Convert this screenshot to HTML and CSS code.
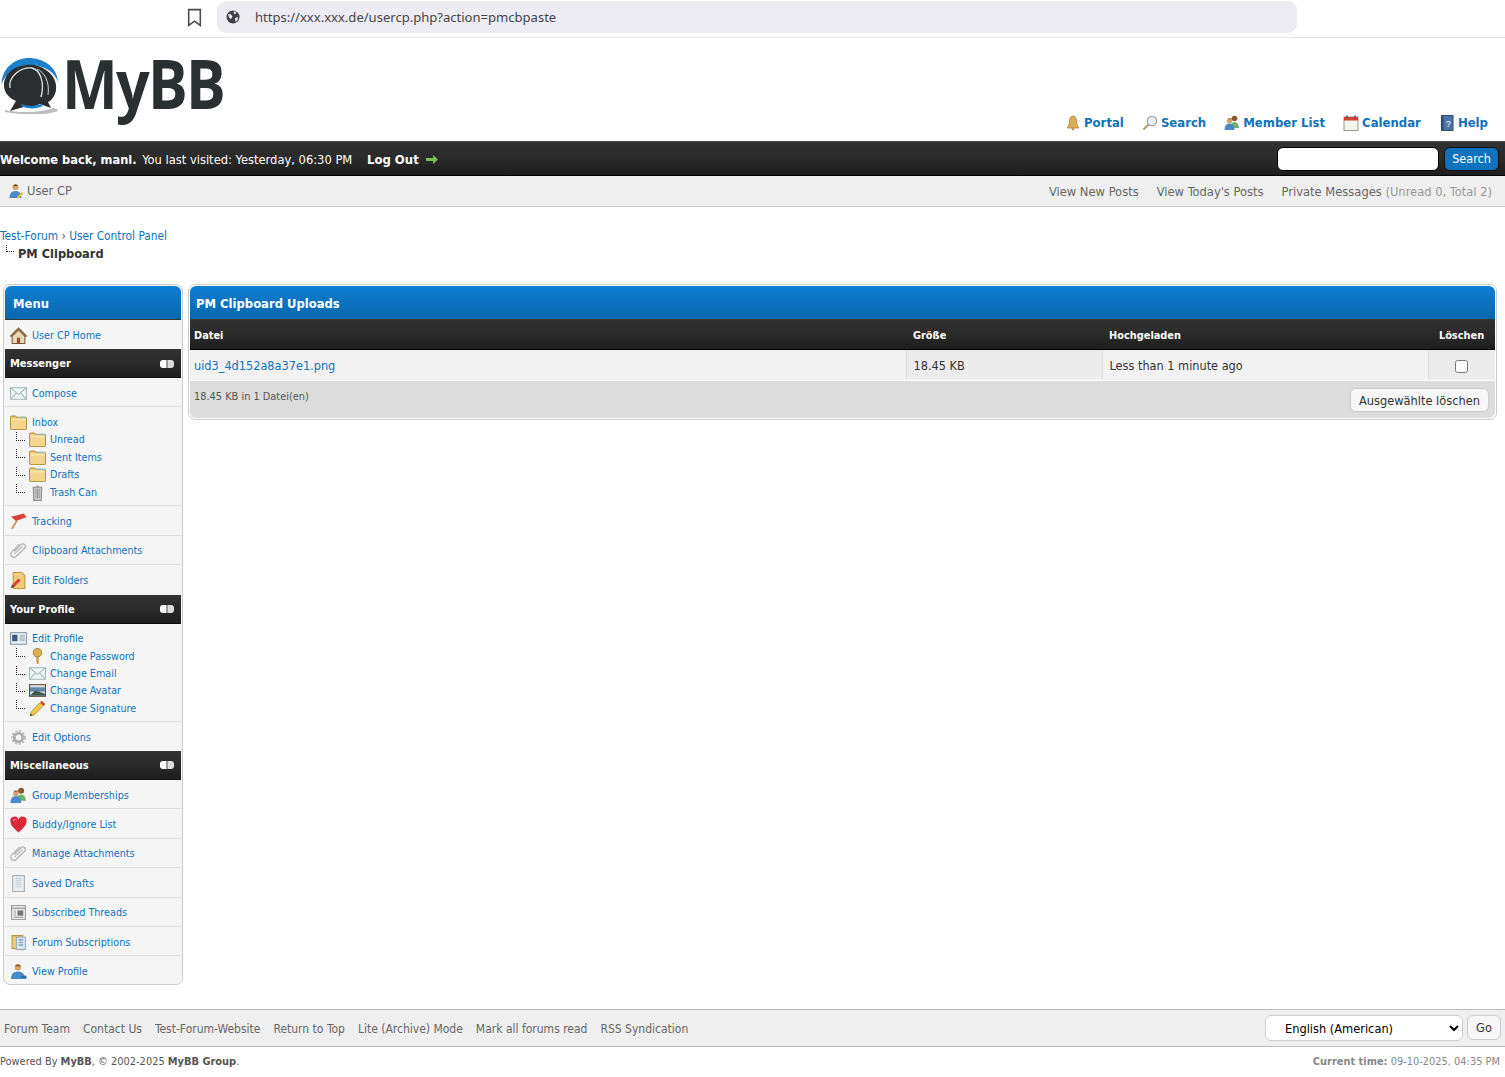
FILE: index.html
```html
<!DOCTYPE html>
<html lang="en">

<head>
  <meta charset="UTF-8">
  <meta name="viewport" content="width=device-width, initial-scale=1.0">
  <title>PM Clipboard</title>
  <link rel="stylesheet" href="styles.css">
</head>

<body>
  <!-- shared icons -->
  <svg class="sprites" xmlns="http://www.w3.org/2000/svg">
    <symbol id="i-folder" viewBox="0 0 16 14">
      <path d="M.5 2.5Q.5 1 2 1h3l1 1h8.5q1 0 1 1v9.5q0 1-1 1H1.5q-1 0-1-1z" fill="#f3d58b" stroke="#b89545"/>
      <path d="M1 4.5h14" stroke="#fbeec4"/>
      <path d="M10 1.5h4.500v1.500H10z" fill="#8fc3e6"/>
    </symbol>
    <symbol id="i-mail" viewBox="0 0 16 12">
      <rect x=".5" y=".5" width="15" height="11" fill="#eef3f3" stroke="#a9bcbc"/>
      <path d="M.5.5 8 7l7.5-6.5M.5 11.5 6 5.500m9.500 6L10 5.500" fill="none" stroke="#a9bcbc"/>
    </symbol>
    <symbol id="i-clip" viewBox="0 0 16 16">
      <path d="M4 9.5 10.5 3a2.300 2.300 0 0 1 3.300 3.300L6 14a3 3 0 0 1-4.300-4.200L9 2.500" transform="translate(0 -.5)" fill="none" stroke="#b5b5b5" stroke-width="1.300"/>
      <path d="M4 11.5 11.5 4.500" fill="none" stroke="#b5b5b5"/>
    </symbol>
    <symbol id="i-users" viewBox="0 0 16 16">
      <circle cx="10.5" cy="3.500" r="2.800" fill="#8a5a2b"/>
      <path d="M6.5 13q0-6 4-6t4.500 6z" fill="#6fae6a"/>
      <circle cx="5.5" cy="6" r="2.600" fill="#d6a06a"/>
      <path d="M5 4.5a2.600 2.600 0 0 1 3 0v-1H3.500z" fill="#6b4a26"/>
      <path d="M.5 15q0-6.500 5-6.500t5 6.500z" fill="#4a89c8"/>
    </symbol>
  </svg>

  <div class="browser-bar">
    <svg class="bookmark" viewBox="0 0 14 18"><path d="M1.5 1.5h11v15L7 12.500l-5.500 4z" fill="none" stroke="#4a4a4a" stroke-width="1.500"/></svg>
    <div class="url-pill">
      <svg class="globe" viewBox="0 0 14 14"><circle cx="7" cy="7" r="6.500" fill="#3f3f46"/><path d="M2 4l3 .5 1.500 2L5 9 3 7.500zM8 1.500l2.500.5L9 4.500 7.500 3zM9 8l3-1-.5 3L9.500 12z" fill="#edecf2"/></svg>
      <span>https://xxx.xxx.de/usercp.php?action=pmcbpaste</span>
    </div>
  </div>

  <div class="header">
    <a class="logo">
      <svg class="logo-bubble" viewBox="0 0 58 56">
        <path d="M.5 26C1 9 15 0 28 0s28 8 29 24c-3-10-14-17-28-17S5 15 .5 26z" fill="#1a80cd"/>
        <path d="M25 7c8-1 15 1 20 5 8 5 11 13 10 20-1 6-4 10-8 12l3 6-11-4c-4 2-9 3-13 2l-17 5 6-10C6 39 3 33 3 27 3 16 13 8 25 7z" fill="#2a2e30"/>
        <path d="M9 30C7 19 19 9 31 10c8 2 13 14 9 29" fill="none" stroke="#e4e7e8" stroke-width="1.300"/>
        <path d="M36 11c7 3 13 12 11 26" fill="none" stroke="#cfd4d6" stroke-width="1"/>
        <path d="M20 46c8 3 16 2 20 0l2 2c-6 3-14 3-20 1z" fill="#1a80cd"/>
        <path d="M4 52c12 3 36 3 48-2l4 1 1 2c-12 5-38 4-53 1z" fill="#bdbdbd"/>
      </svg>
      <span class="logo-text">MyBB</span>
    </a>
    <ul class="top-links">
      <li>
        <svg viewBox="0 0 16 16"><path d="M8 1c3 0 3.500 3 3.500 5 0 3 1 5 2.500 7H2c1.500-2 2.500-4 2.500-7C4.500 4 5 1 8 1z" fill="#d9ae55" stroke="#a07c33" stroke-width=".7"/><path d="M6 13.5h4L8 15.500z" fill="#a07c33"/></svg>
        <a>Portal</a>
      </li>
      <li>
        <svg viewBox="0 0 16 16"><circle cx="10" cy="6" r="4.700" fill="#e8f0f3" stroke="#9aa7ad" stroke-width="1.200"/><path d="M6.5 9.5 1.5 14.500" stroke="#b09a70" stroke-width="2"/></svg>
        <a>Search</a>
      </li>
      <li><svg><use href="#i-users"/></svg><a>Member List</a></li>
      <li>
        <svg viewBox="0 0 16 16"><rect x="1" y="2" width="14" height="13.500" fill="#f5f5ef" stroke="#9a9a90"/><rect x="1" y="2" width="14" height="3.500" fill="#d8413a"/><path d="M4 .5v3M12 .5v3" stroke="#555" stroke-width="1.500"/></svg>
        <a>Calendar</a>
      </li>
      <li>
        <svg viewBox="0 0 16 16"><rect x="2.5" y=".5" width="11.500" height="15" fill="#4d72a8" stroke="#2d4a75"/><path d="M2.5 1.5h2v14h-2z" fill="#2d4a75"/><text x="9.200" y="11.500" font-size="9" fill="#fff" text-anchor="middle" font-family="Liberation Sans">?</text></svg>
        <a>Help</a>
      </li>
    </ul>
  </div>

  <div class="panel">
    <div class="welcome">
      <strong>Welcome back, mani.</strong> You last visited: Yesterday, 06:30 PM
      <a class="logout">Log Out <svg class="logout-arrow" viewBox="0 0 12 9"><path d="M0 3h7V0l5 4.500L7 9V6H0z" fill="#7dbb56"/></svg></a>
    </div>
    <form class="quick-search">
      <input class="search-box" type="text">
      <button class="search-btn" type="button">Search</button>
    </form>
  </div>

  <div class="subpanel">
    <a class="sub-usercp">
      <svg viewBox="0 0 16 16"><circle cx="7.5" cy="4" r="3" fill="#d6a06a"/><path d="M5 3q2.500-3 5 0z" fill="#5a3d20"/><path d="M1.5 15q0-7 6-7t6 7z" fill="#4a89c8"/><path d="M9 14l5-5 1.500 1.500-5 5H9z" fill="#e8c23a"/></svg>
      User CP
    </a>
    <div class="sub-links">
      <a>View New Posts</a>
      <a>View Today's Posts</a>
      <a>Private Messages <span class="pm-count">(Unread 0, Total 2)</span></a>
    </div>
  </div>

  <div class="navigation">
    <a class="blue">Test-Forum</a> › <a class="blue">User Control Panel</a>
    <div class="nav-active"><span class="nav-bit"></span><strong>PM Clipboard</strong></div>
  </div>

  <div class="content">
    <div class="tborder sidebar">
      <div class="thead">Menu</div>

      <a class="row r-first"><svg viewBox="0 0 16 16"><path d="M8 1 .5 8.5 2 9.5V15.500h12V9.5l1.500-1z" fill="#e8d8b8" stroke="#7a5a3a"/><path d="M8 1 .5 8.5 2 9.5 8 3.500l6 6 1.500-1z" fill="#8f6a47"/><rect x="6.5" y="10" width="3" height="5.500" fill="#a34d2a"/></svg>User CP Home</a>

      <div class="tcat">Messenger<span class="toggle"></span></div>
      <a class="row r-sep"><svg><use href="#i-mail"/></svg>Compose</a>
      <div class="group r-sep">
        <a class="line"><svg><use href="#i-folder"/></svg>Inbox</a>
        <a class="line sub"><i class="tree"></i><svg><use href="#i-folder"/></svg>Unread</a>
        <a class="line sub"><i class="tree"></i><svg><use href="#i-folder"/></svg>Sent Items</a>
        <a class="line sub"><i class="tree"></i><svg><use href="#i-folder"/></svg>Drafts</a>
        <a class="line sub"><i class="tree"></i><svg viewBox="0 0 16 16"><path d="M4 3h8l-.5 12.500h-7z" fill="#c9c9c9" stroke="#8c8c8c"/><path d="M6.5 4.5v9M8 4.5v9M9.5 4.5v9" stroke="#8c8c8c" stroke-width=".7"/><path d="M6 3l2-2 2 2z" fill="#aaa"/></svg>Trash Can</a>
      </div>
      <a class="row r-sep"><svg viewBox="0 0 16 16"><path d="M1 3.5 13 .5l2.500 3.500L5.500 7.500z" fill="#d8413a"/><path d="M6 6.5 1 14.500l1.500.5 5-8z" fill="#c8905a"/></svg>Tracking</a>
      <a class="row r-sep"><svg><use href="#i-clip"/></svg>Clipboard Attachments</a>
      <a class="row r-last"><svg viewBox="0 0 16 16"><path d="M3 .5h8l3 3v12H3z" fill="#f0cd7a" stroke="#c0983f"/><path d="M1 15l1-3 6-6 2 2-6 6z" fill="#d8413a"/><path d="M1 15l1-3 2 2z" fill="#444"/></svg>Edit Folders</a>

      <div class="tcat">Your Profile<span class="toggle"></span></div>
      <div class="group r-sep g-profile">
        <a class="line"><svg viewBox="0 0 16 12"><rect x=".5" y=".5" width="15" height="11" fill="#e6ecf2" stroke="#8a9aaa"/><rect x="2" y="2.500" width="5" height="6" fill="#3e5a88"/><path d="M9 3.5h5M9 5.5h5M9 7.5h5" stroke="#9aa"/></svg>Edit Profile</a>
        <a class="line sub"><i class="tree"></i><svg viewBox="0 0 16 18"><circle cx="8" cy="5" r="4.500" fill="#dcb04a" stroke="#a07c33"/><path d="M6.800 9h2.400v8H8l-1.200-1z" fill="#c89a3a"/></svg>Change Password</a>
        <a class="line sub"><i class="tree"></i><svg><use href="#i-mail"/></svg>Change Email</a>
        <a class="line sub"><i class="tree"></i><svg viewBox="0 0 16 12"><rect x=".5" y=".5" width="15" height="11" fill="#dce6ea" stroke="#6a4a3a"/><path d="M1 3h14v4H1z" fill="#5f86a8"/><path d="M1 10.5 6 6l9 3v2H1z" fill="#3e5a50"/></svg>Change Avatar</a>
        <a class="line sub"><i class="tree"></i><svg viewBox="0 0 16 16"><path d="M1 15l1-4L12 1l3 3L5 14z" fill="#ecc94a" stroke="#a98a20" stroke-width=".7"/><path d="M12 1l3 3-1.500 1.500-3-3z" fill="#d8413a"/><path d="M1 15l.6-2.300 1.700 1.700z" fill="#333"/></svg>Change Signature</a>
      </div>
      <a class="row r-last"><svg viewBox="0 0 16 16"><circle cx="8" cy="8" r="4" fill="none" stroke="#aaa" stroke-width="2.500"/><circle cx="8" cy="8" r="6" fill="none" stroke="#bbb" stroke-width="2" stroke-dasharray="2 1.500"/></svg>Edit Options</a>

      <div class="tcat">Miscellaneous<span class="toggle"></span></div>
      <a class="row r-sep"><svg><use href="#i-users"/></svg>Group Memberships</a>
      <a class="row r-sep"><svg viewBox="0 0 16 16"><path d="M8 15.5C4 12 .5 9 .5 5.500A3.800 3.800 0 0 1 8 3.500a3.800 3.800 0 0 1 7.500 2c0 3.500-3.500 6.500-7.500 10z" fill="#d8283a"/><path d="M3 4.5q1-1.500 3-1" fill="none" stroke="#f4a0a8"/></svg>Buddy/Ignore List</a>
      <a class="row r-sep"><svg><use href="#i-clip"/></svg>Manage Attachments</a>
      <a class="row r-sep"><svg viewBox="0 0 16 16"><rect x="2.5" y=".5" width="11" height="15" fill="#e6edf3" stroke="#a5adb3"/><path d="M5 3h6M5 5h6M5 7h6M5 9h6M5 11h6" stroke="#c5cdd3"/></svg>Saved Drafts</a>
      <a class="row r-sep"><svg viewBox="0 0 16 16"><rect x="1.5" y="1.500" width="13" height="13" fill="#eee" stroke="#999"/><path d="M1.5 4h13" stroke="#888"/><rect x="7" y="6" width="5.500" height="5" fill="#777"/><path d="M3.5 6.5h2M3.5 8.5h2M3.5 10.500h2M3.500 12.500h9" stroke="#999"/></svg>Subscribed Threads</a>
      <a class="row r-sep"><svg viewBox="0 0 16 16"><path d="M2 1.5h10V15L2 13.500z" fill="#f0cd7a" stroke="#b89545"/><rect x="6" y="3" width="8.500" height="11.500" fill="#dfeaf0" stroke="#9ab"/><path d="M8 5.5h4.500M8 8h4.500M8 10.500h4.500" stroke="#7fb0d0" stroke-width="1.500"/></svg>Forum Subscriptions</a>
      <a class="row r-end"><svg viewBox="0 0 16 16"><circle cx="7.5" cy="4" r="3" fill="#d6a06a"/><path d="M5 3q2.500-3 5 0z" fill="#6b4a26"/><path d="M1 15q0-7 6.500-7T14 15z" fill="#4a89c8"/><path d="M10 12.5h4V11l2 2.500-2 2V14h-4z" fill="#2a6cae"/></svg>View Profile</a>
    </div>

    <div class="tborder main">
      <div class="thead thead-main">PM Clipboard Uploads</div>
      <table class="files">
        <thead>
          <tr>
            <th class="c-file">Datei</th>
            <th class="c-size">Größe</th>
            <th class="c-date">Hochgeladen</th>
            <th class="c-del">Löschen</th>
          </tr>
        </thead>
        <tbody>
          <tr>
            <td class="c-file"><a class="blue">uid3_4d152a8a37e1.png</a></td>
            <td class="c-size">18.45 KB</td>
            <td class="c-date">Less than 1 minute ago</td>
            <td class="c-del"><input class="check" type="checkbox"></td>
          </tr>
        </tbody>
      </table>
      <div class="table-foot">
        <span class="foot-total">18.45 KB in 1 Datei(en)</span>
        <button class="btn" type="button">Ausgewählte löschen</button>
      </div>
    </div>
  </div>

  <div class="footer-bar">
    <div class="footer-links">
      <a>Forum Team</a>
      <a>Contact Us</a>
      <a>Test-Forum-Website</a>
      <a>Return to Top</a>
      <a>Lite (Archive) Mode</a>
      <a>Mark all forums read</a>
      <a>RSS Syndication</a>
    </div>
    <form class="lang-form">
      <select class="lang-select"><option>English (American)</option></select>
      <button class="btn btn-go" type="button">Go</button>
    </form>
  </div>

  <div class="copyright">
    <span>Powered By <strong>MyBB</strong>, © 2002-2025 <strong>MyBB Group</strong>.</span>
    <span class="time"><strong>Current time:</strong> 09-10-2025, 04:35 PM</span>
  </div>
</body>

</html>
```

FILE: styles.css
```css
* {
  box-sizing: border-box;
}

body {
  margin: 0;
  font-family: "DejaVu Sans", Tahoma, sans-serif;
  font-stretch: condensed;
  font-size: 12px;
  color: #333;
  background: #fff;
}

.sprites {
  display: none;
}

.blue,
.row,
.line,
.top-links a {
  color: #0f72bd;
}

svg {
  flex: none;
}

/* browser chrome */
.browser-bar {
  height: 38px;
  display: flex;
  align-items: flex-start;
  padding: 1px 0 0 187px;
  border-bottom: 1px solid #e6e6e6;
}

.bookmark {
  width: 15px;
  height: 19px;
  margin: 7px 15px 0 0;
}

.url-pill {
  width: 1080px;
  height: 32px;
  display: flex;
  align-items: center;
  padding-left: 9px;
  border-radius: 9px;
  background: #edecf2;
  font-family: "Noto Sans", sans-serif;
  font-stretch: normal;
  font-size: 13.05px;
  color: #44444a;
}

.globe {
  width: 14px;
  height: 14px;
  margin-right: 15px;
}

/* header */
.header {
  height: 103px;
  position: relative;
  display: flex;
  justify-content: space-between;
}

.logo {
  display: flex;
  align-items: flex-start;
  padding: 20px 0 0 1px;
}

.logo-bubble {
  width: 58px;
  height: 56px;
}

.logo-text {
  margin: -23px 0 0 3px;
  font-family: "Open Sans", sans-serif;
  font-stretch: normal;
  font-weight: 700;
  font-size: 68px;
  line-height: 96px;
  color: #2a2f31;
  letter-spacing: -2px;
  transform: scaleX(.87);
  transform-origin: left;
}

.top-links {
  list-style: none;
  margin: 0;
  padding: 0 17px 0 0;
  display: flex;
  gap: 18px;
  align-self: flex-end;
  height: 27px;
}

.top-links li {
  display: flex;
  align-items: center;
  height: 17px;
  gap: 3px;
}

.top-links svg {
  width: 16px;
  height: 16px;
}

.top-links a {
  font-weight: 700;
  font-size: 13px;
}

/* dark bars */
.panel,
.tcat,
.files th {
  background: linear-gradient(#323232, #2a2a2a 50%, #1d1d1d);
  color: #fff;
}

.panel {
  height: 35px;
  display: flex;
  align-items: center;
  justify-content: space-between;
  padding: 0 6px 0 0;
  border-top: 1px solid #444;
  border-bottom: 1px solid #000;
  font-size: 12.8px;
}

.welcome {
  padding-top: 1px;
}

.welcome strong {
  margin-right: 2px;
  font-size: 12.7px;
}

.logout {
  margin-left: 11px;
  font-weight: 700;
  font-size: 13px;
}

.logout-arrow {
  width: 12px;
  height: 9px;
  margin-left: 3px;
}

.quick-search {
  display: flex;
  gap: 5px;
}

.search-box {
  width: 162px;
  height: 24px;
  border: 1px solid #000;
  border-radius: 6px;
  background: #fff;
}

.search-btn {
  width: 55px;
  height: 24px;
  padding: 0;
  border: 1px solid #111;
  border-radius: 6px;
  background: #0f72bd;
  color: #fff;
  font: inherit;
  font-size: 12.5px;
}

.subpanel {
  height: 31px;
  display: flex;
  align-items: center;
  justify-content: space-between;
  padding: 0 13px 0 8px;
  background: #efefef;
  border-bottom: 1px solid #ccc;
  color: #666;
  font-size: 12.8px;
}

.sub-usercp {
  display: flex;
  align-items: center;
  gap: 3px;
  margin-top: -1px;
}

.sub-usercp svg {
  width: 16px;
  height: 16px;
}

.sub-links {
  display: flex;
  gap: 18px;
}

.pm-count {
  color: #999;
}

/* breadcrumb */
.navigation {
  height: 77px;
  padding-top: 21px;
  line-height: 17px;
  font-size: 11.8px;
  color: #555;
}

.nav-active {
  display: flex;
  color: #333;
  font-size: 12.7px;
}

.nav-bit {
  width: 8px;
  height: 7px;
  margin: 0 4px 0 6px;
  border-left: 1px dotted #222;
  border-bottom: 1px dotted #222;
}

/* boxes */
.content {
  display: flex;
  align-items: flex-start;
  gap: 5px;
  padding: 0 8px 0 3px;
}

.tborder {
  border: 1px solid #ccc;
  border-radius: 7px;
  padding: 1px;
  background: #fff;
}

.thead {
  height: 34px;
  display: flex;
  align-items: center;
  padding: 1px 0 0 8px;
  border-radius: 6px 6px 0 0;
  border-bottom: 1px solid #263c30;
  background: linear-gradient(#0f7fd4, #0867ab);
  color: #fff;
  font-weight: 700;
  font-size: 12.9px;
}

.thead-main {
  padding-left: 6px;
}

/* sidebar */
.sidebar {
  width: 180px;
  height: 701px;
  flex: none;
  background: #f5f5f5;
  font-size: 10.7px;
}

.tcat {
  height: 29px;
  display: flex;
  align-items: center;
  justify-content: space-between;
  padding: 1px 7px 0 5px;
  font-weight: 700;
  font-size: 11px;
  border-bottom: 1px solid #111;
}

.toggle {
  width: 14px;
  height: 8px;
  border-radius: 3px;
  background: linear-gradient(90deg, #fff 45%, #999 45%, #999 55%, #ddd 55%);
}

.row {
  display: flex;
  align-items: center;
  height: 29.4px;
  padding: 2px 0 0 5px;
}

.row svg,
.line svg {
  width: 17px;
  height: 17px;
  margin-right: 5px;
}

.r-sep {
  border-bottom: 1px solid #ddd;
}

.r-first {
  height: 29px;
  background: #f5f5f5;
}

.r-end {
  height: 29px;
}

.group {
  padding: 6px 0 5px 5px;
  height: 99px;
}

.g-profile {
  height: 98px;
}

.line {
  display: flex;
  align-items: center;
  height: 17.4px;
  padding-top: 1px;
}

.line.sub {
  padding-left: 6px;
}

.line.sub svg {
  margin-right: 4px;
}

.tree {
  width: 9px;
  height: 9px;
  margin: -7px 4px 0 0;
  border-left: 1px dotted #222;
  border-bottom: 1px dotted #222;
  flex: none;
}

/* main table */
.main {
  flex: 1;
}

.files {
  width: 100%;
  border-collapse: collapse;
  table-layout: fixed;
}

.files th {
  height: 29px;
  padding: 2px 7px 0;
  text-align: left;
  font-size: 10.9px;
  font-weight: 700;
  border-bottom: 1px solid #000;
}

.files td {
  height: 31px;
  padding: 1px 7px 0;
  background: #f2f2f2;
  border-right: 1px solid #ddd;
  border-bottom: 1px solid #fff;
  font-size: 12.6px;
}

.files .c-file {
  padding-left: 4px;
}

.files td.c-del {
  border-right: 0;
  background: #ececec;
  text-align: center;
}

.files td.c-size {
  background: #ececec;
}

.files th.c-del {
  text-align: center;
  padding: 2px 0 0;
}

.c-size {
  width: 196px;
}

.c-date {
  width: 326px;
}

.c-del {
  width: 67px;
}

.check {
  width: 13px;
  height: 13px;
  margin: 0;
  vertical-align: middle;
}

.table-foot {
  height: 37px;
  display: flex;
  align-items: flex-start;
  justify-content: space-between;
  padding: 7px 6px 0 4px;
  background: #dcdcdc;
  border-radius: 0 0 6px 6px;
  font-size: 10.9px;
  color: #555;
}

.foot-total {
  margin-top: 2px;
}

.btn {
  height: 24px;
  padding: 1px 8px 0;
  border: 1px solid #ccc;
  border-radius: 6px;
  background: #f6f6f6;
  color: #333;
  font: inherit;
  font-size: 12.7px;
}

/* footer */
.footer-bar {
  position: absolute;
  top: 1009px;
  left: 0;
  right: 0;
  height: 38px;
  display: flex;
  align-items: center;
  justify-content: space-between;
  padding: 0 4px;
  background: #efefef;
  border-top: 1px solid #bbb;
  border-bottom: 1px solid #bbb;
  color: #666;
  font-size: 12px;
}

.footer-links {
  display: flex;
  gap: 13px;
  padding-top: 1px;
}

.lang-form {
  display: flex;
  gap: 4px;
}

.lang-select {
  width: 198px;
  height: 26px;
  padding-left: 15px;
  border: 1px solid #ccc;
  border-radius: 6px;
  background: #fff;
  color: #000;
  font: inherit;
  font-size: 12.7px;
}

.btn-go {
  width: 34px;
  height: 25px;
  padding: 0;
}

.copyright {
  position: absolute;
  top: 1054px;
  left: 0;
  right: 0;
  display: flex;
  justify-content: space-between;
  padding-right: 5px;
  font-size: 10.95px;
  line-height: 16px;
  color: #555;
}

.time {
  color: #888;
}
```
